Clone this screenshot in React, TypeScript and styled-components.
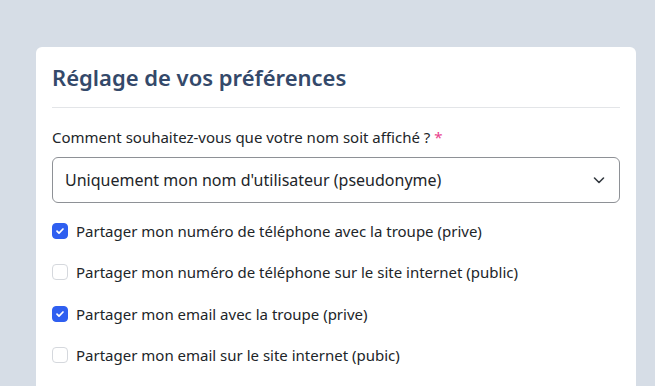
import React, { useState } from 'react'
import styled, { createGlobalStyle } from 'styled-components'

const GlobalStyle = createGlobalStyle`
  html, body {
    margin: 0;
    padding: 0;
    background: #d6dde6;
    font-family: 'Noto Sans', 'Open Sans', sans-serif;
    color: #212529;
  }
`

const options = [
  { label: 'Partager mon numéro de téléphone avec la troupe (prive)', checked: true },
  { label: 'Partager mon numéro de téléphone sur le site internet (public)', checked: false },
  { label: 'Partager mon email avec la troupe (prive)', checked: true },
  { label: 'Partager mon email sur le site internet (pubic)', checked: false },
]

function App() {
  const [values, setValues] = useState(options.map((o) => o.checked))

  const toggle = (i: number) => {
    setValues((v) => v.map((c, j) => (j === i ? !c : c)))
  }

  return (
    <Page>
      <GlobalStyle />
      <Card>
        <Title>Réglage de vos préférences</Title>
        <Divider />
        <Label>
          Comment souhaitez-vous que votre nom soit affiché ? <Required>*</Required>
        </Label>
        <SelectBox>
          <span>Uniquement mon nom d'utilisateur (pseudonyme)</span>
          <svg width="16" height="16" viewBox="0 0 16 16" fill="none">
            <path d="M3.5 6l4.5 4.5L12.5 6" stroke="#343a40" strokeWidth="1.6" strokeLinecap="round" strokeLinejoin="round" />
          </svg>
        </SelectBox>
        <CheckList>
          {options.map((o, i) => (
            <CheckRow key={o.label} onClick={() => toggle(i)}>
              <Box $checked={values[i]}>
                {values[i] && (
                  <svg width="10" height="10" viewBox="0 0 10 10" fill="none">
                    <path d="M2 5.2l2 2L8 3" stroke="#fff" strokeWidth="1.7" strokeLinecap="round" strokeLinejoin="round" />
                  </svg>
                )}
              </Box>
              <span>{o.label}</span>
            </CheckRow>
          ))}
        </CheckList>
      </Card>
    </Page>
  )
}

export default App

const Page = styled.div`
  width: 655px;
  height: 386px;
  overflow: hidden;
  padding: 47px 0 0 36px;
  box-sizing: border-box;
`

const Card = styled.div`
  width: 600px;
  min-height: 400px;
  background: #fff;
  border-radius: 6px;
  padding: 14px 16px;
  box-sizing: border-box;
`

const Title = styled.h1`
  margin: 0;
  font-size: 22px;
  font-weight: 600;
  color: #34496a;
  line-height: 32px;
`

const Divider = styled.div`
  height: 1px;
  background: #e3e5e8;
  margin: 14px 0 18px;
`

const Label = styled.div`
  font-size: 15px;
  line-height: 22px;
  color: #212529;
`

const Required = styled.span`
  color: #e83e8c;
`

const SelectBox = styled.div`
  margin-top: 9px;
  height: 46px;
  border: 1px solid #8e9196;
  border-radius: 6px;
  box-sizing: border-box;
  display: flex;
  align-items: center;
  justify-content: space-between;
  padding: 0 12px 0 12px;
  font-size: 16px;
  color: #212529;
`

const CheckList = styled.div`
  margin-top: 7px;
  display: flex;
  flex-direction: column;
`

const CheckRow = styled.label`
  display: flex;
  align-items: center;
  gap: 8px;
  height: 41.5px;
  font-size: 15px;
  color: #212529;
  cursor: pointer;
`

const Box = styled.span<{ $checked: boolean }>`
  width: 16px;
  height: 16px;
  border-radius: 4px;
  box-sizing: border-box;
  display: flex;
  align-items: center;
  justify-content: center;
  flex-shrink: 0;
  background: ${(p) => (p.$checked ? '#2f5ff0' : '#fff')};
  border: 1px solid ${(p) => (p.$checked ? '#2f5ff0' : '#d5d8dd')};
`
